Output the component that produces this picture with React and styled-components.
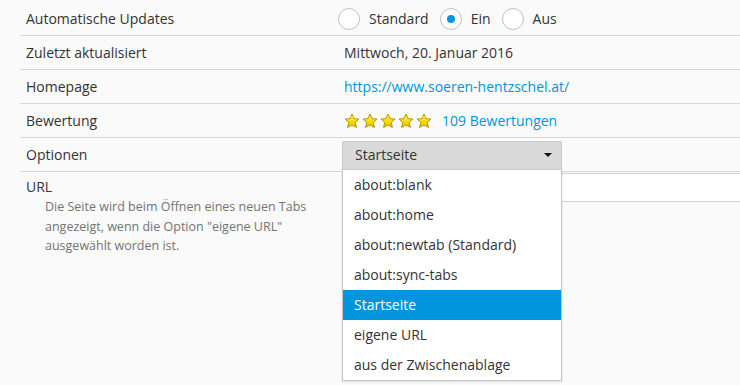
import React from "react";
import styled, { createGlobalStyle } from "styled-components";

const GlobalStyle = createGlobalStyle`
  html, body {
    margin: 0;
    background: #fafafa;
    overflow: hidden;
  }
  body {
    font-family: "Open Sans", "Noto Sans", sans-serif;
    font-size: 14px;
    color: #333;
  }
`;

const Page = styled.div`
  width: 720px;
  height: 383px;
  padding: 2px 0 0 20px;
`;

const Row = styled.div`
  display: grid;
  grid-template-columns: 322px 1fr;
  align-items: ${(p) => (p.$top ? "start" : "center")};
  min-height: 33px;
  border-bottom: ${(p) => (p.$last ? "none" : "1px solid #d6d6d6")};
`;

const Label = styled.div`
  padding-left: 6px;
  line-height: 20px;
  padding-top: ${(p) => (p.$top ? "5px" : "0")};
`;

const Hint = styled.div`
  padding-left: 19px;
  padding-right: 10px;
  font-size: 12.5px;
  line-height: 19.5px;
  color: #737373;
`;

const Value = styled.div`
  display: flex;
  align-items: center;
  line-height: 20px;
  padding-left: 2px;
`;

const RadioGroup = styled.div`
  display: flex;
  align-items: center;
  margin-left: -6px;
`;

const RadioItem = styled.label`
  display: flex;
  align-items: center;
  margin-right: 11px;
`;

const RadioCircle = styled.span`
  box-sizing: border-box;
  width: 22px;
  height: 22px;
  border-radius: 50%;
  border: 1px solid #c1c1c1;
  background: #fff;
  margin-right: 9px;
  display: flex;
  align-items: center;
  justify-content: center;
  &::after {
    content: "";
    width: 8px;
    height: 8px;
    border-radius: 50%;
    background: ${(p) => (p.$checked ? "#0095dd" : "transparent")};
  }
`;

const Link = styled.a`
  color: #0095dd;
  text-decoration: none;
`;

const Stars = styled.span`
  display: flex;
  gap: 2px;
  margin-right: 10px;
`;

const SelectWrap = styled.div`
  position: relative;
  width: 220px;
  margin-left: -2px;
`;

const SelectButton = styled.div`
  box-sizing: border-box;
  height: 28px;
  display: flex;
  align-items: center;
  justify-content: space-between;
  padding: 0 9px 0 12px;
  background: #dadada;
  border: 1px solid #c9c9c9;
  border-bottom: none;
  border-radius: 2px 2px 0 0;
`;

const Caret = styled.span`
  width: 0;
  height: 0;
  border-left: 4px solid transparent;
  border-right: 4px solid transparent;
  border-top: 4px solid #111;
`;

const Menu = styled.ul`
  position: absolute;
  top: 100%;
  left: 0;
  width: 100%;
  box-sizing: border-box;
  margin: 0;
  padding: 0;
  list-style: none;
  background: #fff;
  border: 1px solid #c6c6c6;
  box-shadow: 0 1px 2px rgba(0, 0, 0, 0.12);
  z-index: 5;
`;

const MenuItem = styled.li`
  height: 30px;
  line-height: 30px;
  padding-left: 11px;
  background: ${(p) => (p.$active ? "#0095dd" : "transparent")};
  color: ${(p) => (p.$active ? "#fff" : "#333")};
`;

const TextInput = styled.div`
  box-sizing: border-box;
  height: 29px;
  margin-top: 1px;
  width: calc(100% + 6px);
  background: #fff;
  border: 1px solid #cfcfcf;
`;

const Star = () => (
  <svg width="16" height="16" viewBox="0 0 16 16">
    <defs>
      <linearGradient id="sg" x1="0" y1="0" x2="0" y2="1">
        <stop offset="0" stopColor="#fff36a" />
        <stop offset="0.55" stopColor="#f7dc00" />
        <stop offset="1" stopColor="#e2b800" />
      </linearGradient>
    </defs>
    <path
      d="M8 1 L10.1 5.6 L15 6.1 L11.3 9.4 L12.4 14.5 L8 11.9 L3.6 14.5 L4.7 9.4 L1 6.1 L5.9 5.6 Z"
      fill="url(#sg)"
      stroke="#a88f00"
      strokeWidth="0.9"
      strokeLinejoin="round"
    />
  </svg>
);

const options = [
  "about:blank",
  "about:home",
  "about:newtab (Standard)",
  "about:sync-tabs",
  "Startseite",
  "eigene URL",
  "aus der Zwischenablage",
];

export default () => {
  const radios = [
    { name: "Standard", checked: false },
    { name: "Ein", checked: true },
    { name: "Aus", checked: false },
  ];
  return (
    <Page>
      <GlobalStyle />
      <Row>
        <Label>Automatische Updates</Label>
        <Value>
          <RadioGroup>
            {radios.map((r) => (
              <RadioItem key={r.name}>
                <RadioCircle $checked={r.checked} />
                {r.name}
              </RadioItem>
            ))}
          </RadioGroup>
        </Value>
      </Row>
      <Row>
        <Label>Zuletzt aktualisiert</Label>
        <Value>Mittwoch, 20. Januar 2016</Value>
      </Row>
      <Row>
        <Label>Homepage</Label>
        <Value>
          <Link href="#">https://www.soeren-hentzschel.at/</Link>
        </Value>
      </Row>
      <Row>
        <Label>Bewertung</Label>
        <Value>
          <Stars>
            {[0, 1, 2, 3, 4].map((i) => (
              <Star key={i} />
            ))}
          </Stars>
          <Link href="#">109 Bewertungen</Link>
        </Value>
      </Row>
      <Row>
        <Label>Optionen</Label>
        <Value>
          <SelectWrap>
            <SelectButton>
              Startseite
              <Caret />
            </SelectButton>
            <Menu>
              {options.map((o) => (
                <MenuItem key={o} $active={o === "Startseite"}>
                  {o}
                </MenuItem>
              ))}
            </Menu>
          </SelectWrap>
        </Value>
      </Row>
      <Row $top $last>
        <Label $top>
          URL
          <Hint>
            Die Seite wird beim Öffnen eines neuen Tabs angezeigt, wenn die
            Option "eigene URL" ausgewählt worden ist.
          </Hint>
        </Label>
        <TextInput />
      </Row>
    </Page>
  );
};
